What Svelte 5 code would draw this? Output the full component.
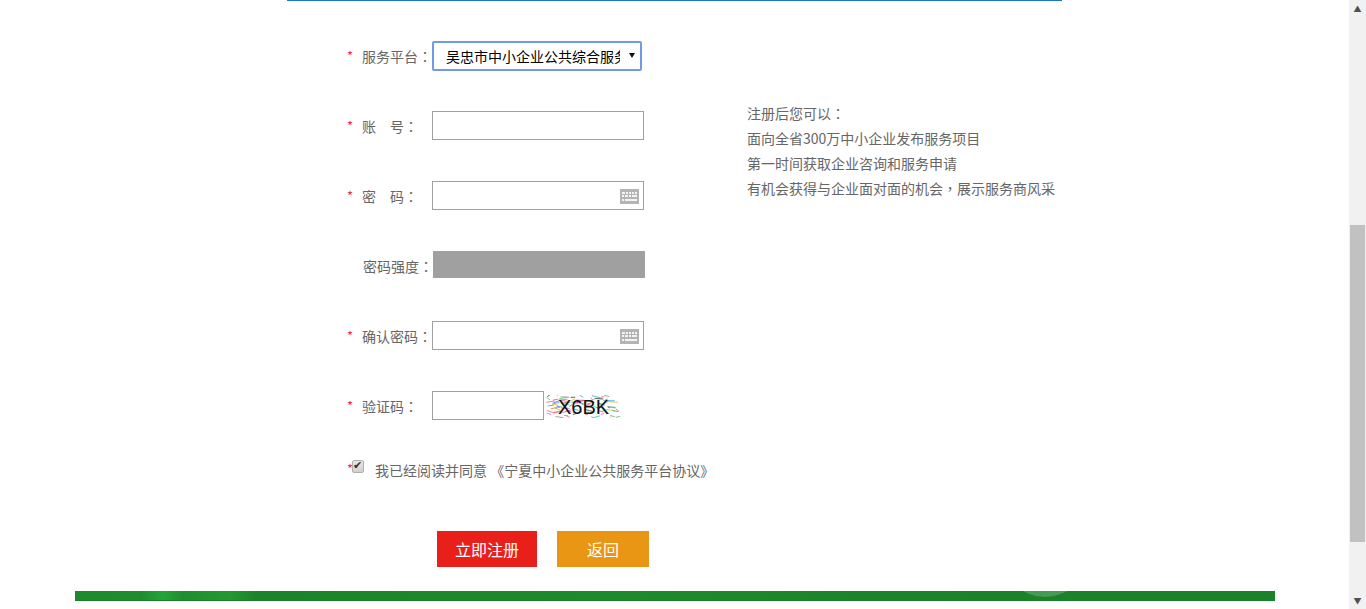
<script>
	const notes = [
		'注册后您可以：',
		'面向全省300万中小企业发布服务项目',
		'第一时间获取企业咨询和服务申请',
		'有机会获得与企业面对面的机会，展示服务商风采'
	];

	// captcha noise, fixed seed so the picture stays the same
	const colors = ['#e85ad0', '#50d0a8', '#6a70e0', '#d8c840', '#60c860', '#9a9a9a', '#40b0e8', '#e87878', '#505050', '#f070c0'];
	let seed = 23;
	function rnd(n) {
		seed = (seed * 9301 + 49297) % 233280;
		return (seed / 233280) * n;
	}
	const noise = Array.from({ length: 85 }, () => {
		const x = rnd(74);
		const y = rnd(23);
		return { x, y, x2: x + 2 + rnd(7), y2: y + rnd(6) - 3, c: colors[Math.floor(rnd(colors.length))] };
	});
</script>

{#snippet mark(text)}
	{#each text.split(/([：，])/) as part, i}
		{#if i % 2}<span class="mark">{part}</span>{:else}{part}{/if}
	{/each}
{/snippet}

{#snippet keyboard()}
	<svg class="keyboard" width="19" height="15" viewBox="0 0 19 15">
		<rect width="19" height="15" fill="#b4b4b4" />
		<g fill="#f4f4f4">
			<rect x="2" y="3" width="3" height="2" />
			<rect x="6" y="3" width="2" height="2" />
			<rect x="9" y="3" width="2" height="2" />
			<rect x="12" y="3" width="2" height="2" />
			<rect x="15" y="3" width="2" height="2" />
			<rect x="2" y="6" width="2" height="2" />
			<rect x="5" y="6" width="3" height="2" />
			<rect x="9" y="6" width="2" height="2" />
			<rect x="12" y="6" width="5" height="2" />
			<rect x="2" y="10" width="2" height="2" />
			<rect x="5" y="10" width="12" height="2" />
		</g>
	</svg>
{/snippet}

<div class="screen">
	<div class="page">
		<div class="panel">
			<form class="form">
				<div class="fields">
					<div class="row">
						<span class="star">*</span>
						<label class="name" for="platform">{@render mark('服务平台：')}</label>
						<div class="select-box">
							<select id="platform">
								<option>吴忠市中小企业公共综合服务平台</option>
							</select>
							<span class="caret"></span>
						</div>
					</div>
					<div class="row">
						<span class="star">*</span>
						<label class="name" for="account">{@render mark('账　号：')}</label>
						<input id="account" class="text" type="text" />
					</div>
					<div class="row">
						<span class="star">*</span>
						<label class="name" for="password">{@render mark('密　码：')}</label>
						<div class="key-box">
							<input id="password" class="text" type="password" />
							{@render keyboard()}
						</div>
					</div>
					<div class="row">
						<span class="star"></span>
						<span class="name strength-name">{@render mark('密码强度：')}</span>
						<div class="strength"></div>
					</div>
					<div class="row">
						<span class="star">*</span>
						<label class="name" for="confirm">{@render mark('确认密码：')}</label>
						<div class="key-box">
							<input id="confirm" class="text" type="password" />
							{@render keyboard()}
						</div>
					</div>
					<div class="row">
						<span class="star">*</span>
						<label class="name" for="code">{@render mark('验证码：')}</label>
						<input id="code" class="text code" type="text" />
						<svg class="captcha" width="76" height="23" viewBox="0 0 76 23">
							{#each noise as n}
								<line x1={n.x} y1={n.y} x2={n.x2} y2={n.y2} stroke={n.c} stroke-width="0.9" />
							{/each}
							<text x="12" y="19" class="captcha-text">X6BK</text>
						</svg>
					</div>
				</div>
				<div class="agree">
					<span class="star agree-star">*</span>
					<input class="check" type="checkbox" checked />
					<span class="agree-text">我已经阅读并同意 《宁夏中小企业公共服务平台协议》</span>
				</div>
				<div class="actions">
					<button type="button" class="btn submit">立即注册</button>
					<button type="button" class="btn back">返回</button>
				</div>
			</form>
			<div class="notes">
				{#each notes as line}
					<p>{@render mark(line)}</p>
				{/each}
			</div>
		</div>
		<div class="footer">
			<div class="footer-glow"></div>
		</div>
	</div>
	<div class="scrollbar">
		<span class="arrow">▲</span>
		<div class="track"><div class="thumb"></div></div>
		<span class="arrow">▼</span>
	</div>
</div>

<style>
	:global(body) {
		overflow: hidden;
		background: #fff;
	}

	.screen {
		display: flex;
		height: 609px;
		font-family: "Noto Sans CJK SC", "Liberation Sans", sans-serif;
		font-size: 14px;
		color: #666;
	}

	.page {
		width: 1349px;
		flex: none;
		display: flex;
		flex-direction: column;
		align-items: flex-start;
	}

	.panel {
		width: 775px;
		height: 591px;
		margin-left: 287px;
		box-sizing: border-box;
		border-top: 1px solid #1a7ab8;
		display: flex;
		flex: none;
	}

	.form {
		width: 400px;
		padding-left: 60px;
		padding-top: 40px;
		box-sizing: border-box;
		flex: none;
	}

	.fields {
		display: flex;
		flex-direction: column;
		gap: 40px;
	}

	.row {
		display: flex;
		align-items: center;
		height: 30px;
	}

	.star {
		width: 15px;
		flex: none;
		color: #f0285a;
		font-size: 13px;
		line-height: 14px;
	}

	.name {
		width: 70px;
		flex: none;
		white-space: nowrap;
		line-height: 20px;
	}

	/* centred full-width punctuation, as in the original */
	.mark {
		font-family: "Noto Sans CJK TC", sans-serif;
	}

	.text {
		width: 212px;
		height: 29px;
		margin: 0;
		padding: 0 4px;
		box-sizing: border-box;
		border: 1px solid #a0a0a0;
		background: #fff;
		outline: none;
		display: block;
		align-self: flex-start;
	}

	.key-box {
		position: relative;
		align-self: flex-start;
	}

	.code {
		width: 112px;
	}

	.select-box {
		position: relative;
		width: 210px;
		height: 30px;
	}

	select {
		appearance: none;
		width: 100%;
		height: 100%;
		margin: 0;
		padding: 0 20px 0 12px;
		box-sizing: border-box;
		border: 2px solid #7199e8;
		border-radius: 2px;
		background: #fff;
		color: #000;
		font: inherit;
		outline: none;
	}

	.caret {
		position: absolute;
		left: 197px;
		top: 12px;
		border-left: 3px solid transparent;
		border-right: 3px solid transparent;
		border-top: 5px solid #111;
		pointer-events: none;
	}

	.keyboard {
		position: absolute;
		right: 5px;
		top: 8px;
	}

	.strength-name {
		margin-left: 1px;
	}

	.strength {
		width: 212px;
		height: 27px;
		background: #a0a0a0;
		align-self: flex-start;
	}

	.captcha {
		margin-left: 2px;
		margin-top: 1px;
		flex: none;
	}

	.captcha-text {
		font-family: "Liberation Sans", sans-serif;
		font-size: 20px;
		fill: #111;
	}

	.agree {
		display: flex;
		align-items: flex-start;
		margin-top: 39px;
		height: 24px;
	}

	.agree-star {
		width: 5px;
		margin-top: 2px;
	}

	.check {
		appearance: none;
		position: relative;
		width: 12px;
		height: 13px;
		margin: 0;
		box-sizing: border-box;
		border: 1px solid #b0b0b0;
		border-radius: 2px;
		background: linear-gradient(#e8e8e8, #d0d0d0);
		flex: none;
	}

	.check::after {
		content: '✔';
		position: absolute;
		left: 0;
		top: -2px;
		font-family: "DejaVu Sans", sans-serif;
		font-size: 11px;
		line-height: 14px;
		color: #333;
	}

	.agree-text {
		margin-left: 11px;
		line-height: 20px;
		white-space: nowrap;
	}

	.actions {
		display: flex;
		gap: 20px;
		margin-top: 47px;
		margin-left: 90px;
	}

	.btn {
		height: 36px;
		border: 0;
		padding: 0;
		color: #fff;
		font: inherit;
		font-size: 16px;
	}

	.submit {
		width: 100px;
		background: #e9201a;
	}

	.back {
		width: 92px;
		background: #e89614;
	}

	.notes {
		margin-top: 100px;
		margin-left: 60px;
	}

	.notes p {
		margin: 0;
		line-height: 25px;
		white-space: nowrap;
	}

	.footer {
		position: relative;
		width: 1200px;
		height: 10px;
		margin-left: 75px;
		flex: none;
		overflow: hidden;
		box-shadow: inset 0 -1px 0 #18802a;
		background: linear-gradient(90deg, #1d8a2d 0, #1f8c2e 5.5%, #23a636 7.3%, #1f8e2f 9%, #229a30 13%, #1b842a 15%, #1d8a2c 45%, #1b822a 75%, #1b822a 100%);
	}

	.footer-glow {
		position: absolute;
		left: 927px;
		top: -80px;
		width: 86px;
		height: 86px;
		border-radius: 50%;
		background: #479a55;
	}

	.scrollbar {
		width: 17px;
		flex: none;
		background: #f1f1f1;
		display: flex;
		flex-direction: column;
		align-items: center;
	}

	.arrow {
		height: 17px;
		flex: none;
		font-size: 8px;
		line-height: 17px;
		color: #505050;
	}

	.track {
		flex: 1;
		width: 100%;
		padding-top: 208px;
		box-sizing: border-box;
	}

	.thumb {
		width: 15px;
		height: 317px;
		margin: 0 auto;
		background: #c1c1c1;
	}
</style>
